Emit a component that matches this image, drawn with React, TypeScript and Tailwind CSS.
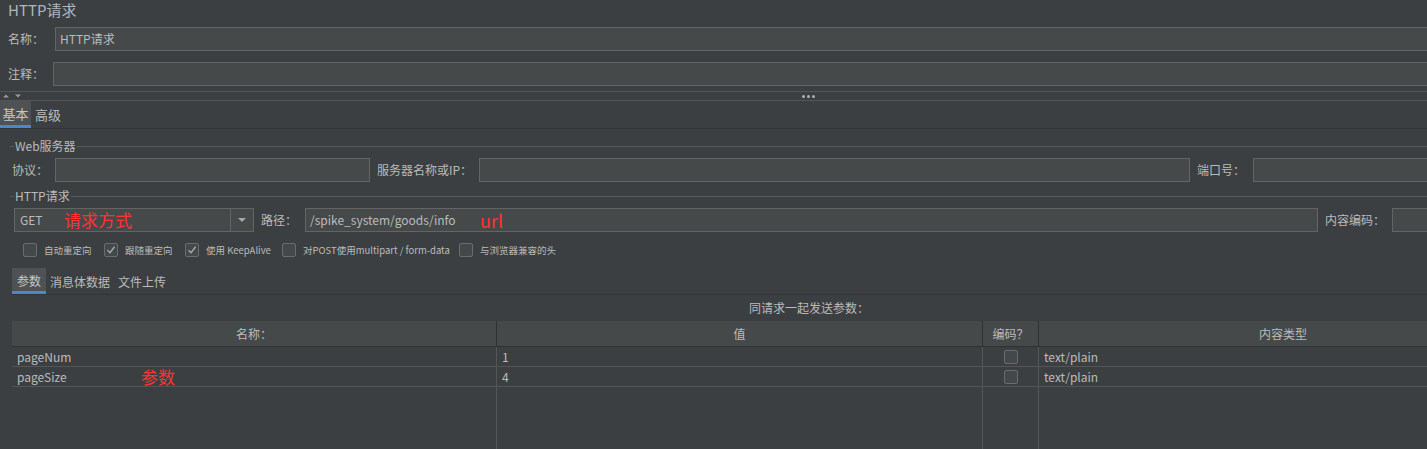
import React from "react";

const field = "h-full border border-[#646464] bg-[#45494a]";

function Check({ checked = false }: { checked?: boolean }) {
  return (
    <div className="flex h-[14px] w-[14px] shrink-0 items-center justify-center rounded-[2px] border border-[#6b6b6b] bg-[#43494a]">
      {checked && (
        <svg width="10" height="10" viewBox="0 0 10 10">
          <path d="M1.5 5.2 L4 7.8 L8.6 1.8" fill="none" stroke="#a8a8a8" strokeWidth="1.4" />
        </svg>
      )}
    </div>
  );
}

function GroupTitle({ title }: { title: string }) {
  return (
    <div className="flex h-[16px] items-center">
      <div className="ml-[10px] h-px w-[4px] bg-[#5a5a5a]" />
      <span className="px-[1px] text-[12px] leading-[16px] text-[#bbbbbb]">{title}</span>
      <div className="h-px flex-1 bg-[#5a5a5a]" />
    </div>
  );
}

const options = [
  { label: "自动重定向", checked: false, w: "w-[81px]" },
  { label: "跟随重定向", checked: true, w: "w-[81px]" },
  { label: "使用 KeepAlive", checked: true, w: "w-[97px]" },
  { label: "对POST使用multipart / form-data", checked: false, w: "w-[177px]" },
  { label: "与浏览器兼容的头", checked: false, w: "w-[140px]" },
];

const params = [
  { name: "pageNum", value: "1", type: "text/plain", note: "" },
  { name: "pageSize", value: "4", type: "text/plain", note: "参数" },
];

export default function App() {
  return (
    <div className="h-[449px] w-[1427px] overflow-hidden bg-[#3c3f41] font-['Noto_Sans_CJK_SC','Noto_Sans',sans-serif] text-[12px] text-[#bbbbbb]">
      {/* title */}
      <div className="h-[19px] pl-[8px] text-[15px] leading-[19px] text-[#aeb6bf]">HTTP请求</div>

      {/* name / comment */}
      <div className="mt-[8px] flex h-[24px] items-center">
        <span className="w-[55px] shrink-0 pl-[8px]">名称：</span>
        <div className={`${field} -mr-[6px] flex flex-1 items-center pl-[4px] text-[#bbbbbb]`}>HTTP请求</div>
      </div>
      <div className="mt-[11px] flex h-[24px] items-center">
        <span className="w-[53px] shrink-0 pl-[8px]">注释：</span>
        <div className={`${field} -mr-[6px] flex-1`} />
      </div>

      {/* splitter */}
      <div className="relative mt-[5px] h-[10px] border-y border-[#555555]">
        <svg width="24" height="6" viewBox="0 0 24 6" className="absolute left-[2px] top-[1px]">
          <path d="M1 4.5 L4 1.5 L7 4.5 Z" fill="#9a9a9a" />
          <path d="M13 1.5 L19 1.5 L16 4.5 Z" fill="#9a9a9a" />
        </svg>
        <div className="absolute left-[802px] top-[3px] flex gap-[2px]">
          <div className="h-[3px] w-[3px] rounded-full bg-[#b0b0b0]" />
          <div className="h-[3px] w-[3px] rounded-full bg-[#b0b0b0]" />
          <div className="h-[3px] w-[3px] rounded-full bg-[#b0b0b0]" />
        </div>
      </div>

      {/* basic / advanced tabs */}
      <div className="flex h-[28px] border-b border-[#323436]">
        <div className="flex h-[27px] w-[31px] items-center justify-center border-b-[3px] border-[#4a88c7] bg-[#4e5254] pt-[2px] text-[13px] text-[#c8c8c8]">
          基本
        </div>
        <div className="flex h-[27px] items-center pl-[4px] text-[13px]">高级</div>
      </div>

      {/* web server */}
      <div className="mt-[9px]">
        <GroupTitle title="Web服务器" />
      </div>
      <div className="mt-[4px] flex h-[24px] items-center">
        <span className="w-[55px] shrink-0 pl-[12px]">协议：</span>
        <div className={`${field} w-[315px] shrink-0`} />
        <span className="w-[109px] shrink-0 pl-[7px]">服务器名称或IP：</span>
        <div className={`${field} w-[711px] shrink-0`} />
        <span className="w-[63px] shrink-0 pl-[7px]">端口号：</span>
        <div className={`${field} -mr-[6px] flex-1`} />
      </div>

      {/* http request */}
      <div className="mt-[6px]">
        <GroupTitle title="HTTP请求" />
      </div>
      <div className="mt-[4px] flex h-[24px] items-center">
        <div className={`${field} ml-[14px] flex w-[240px] shrink-0 items-center`}>
          <span className="w-[49px] pl-[5px]">GET</span>
          <span className="flex-1 text-[17px] leading-[20px] text-[#ff3333]">请求方式</span>
          <div className="flex h-full w-[23px] items-center justify-center border-l border-[#646464]">
            <svg width="10" height="6" viewBox="0 0 10 6">
              <path d="M1 1 L9 1 L5 5 Z" fill="#a8a8a8" />
            </svg>
          </div>
        </div>
        <span className="w-[51px] shrink-0 pl-[7px]">路径：</span>
        <div className={`${field} flex w-[1013px] shrink-0 items-center`}>
          <span className="w-[174px] pl-[4px]">/spike_system/goods/info</span>
          <span className="text-[18px] leading-[20px] text-[#ff3333]">url</span>
        </div>
        <span className="w-[74px] shrink-0 pl-[7px]">内容编码：</span>
        <div className={`${field} -mr-[6px] flex-1`} />
      </div>

      {/* options */}
      <div className="mt-[11px] flex h-[14px] items-center pl-[23px]">
        {options.map((o) => (
          <div key={o.label} className={`flex shrink-0 items-center gap-[7px] ${o.w}`}>
            <Check checked={o.checked} />
            <span className="whitespace-nowrap text-[9.5px] leading-[14px]">{o.label}</span>
          </div>
        ))}
      </div>

      {/* param tabs */}
      <div className="ml-[12px] mt-[11px] flex h-[27px] border-b border-[#323436]">
        <div className="flex h-[26px] items-center border-b-[3px] border-[#4a88c7] bg-[#4e5254] px-[5px] pt-[2px] text-[#c8c8c8]">
          参数
        </div>
        <div className="flex h-[26px] items-center px-[4px] pt-[1px]">消息体数据</div>
        <div className="flex h-[26px] items-center px-[4px] pt-[1px]">文件上传</div>
      </div>

      <div className="flex h-[26px] items-center pl-[749px]">同请求一起发送参数：</div>

      {/* table */}
      <div className="ml-[12px] flex h-[200px] w-[1515px] flex-col">
        <div className="grid h-[26px] grid-cols-[485px_486px_56px_488px] border-b border-[#2f3133] bg-[#45494a]">
          <div className="flex items-center justify-center border-r border-[#2f3133]">名称：</div>
          <div className="flex items-center justify-center border-r border-[#2f3133]">值</div>
          <div className="flex items-center justify-center border-r border-[#2f3133]">编码？</div>
          <div className="flex items-center justify-center">内容类型</div>
        </div>
        {params.map((p) => (
          <div key={p.name} className="grid h-[20px] grid-cols-[485px_486px_56px_488px] border-b border-[#555555]">
            <div className="flex items-center border-r border-[#555555] pl-[5px]">
              <span className="w-[124px]">{p.name}</span>
              {p.note && <span className="text-[17px] leading-[18px] text-[#ff3333]">{p.note}</span>}
            </div>
            <div className="flex items-center border-r border-[#555555] pl-[5px]">{p.value}</div>
            <div className="flex items-center justify-center border-r border-[#555555]">
              <Check />
            </div>
            <div className="flex items-center pl-[5px]">{p.type}</div>
          </div>
        ))}
        <div className="grid flex-1 grid-cols-[485px_486px_56px_488px]">
          <div className="border-r border-[#555555]" />
          <div className="border-r border-[#555555]" />
          <div className="border-r border-[#555555]" />
          <div />
        </div>
      </div>
    </div>
  );
}
